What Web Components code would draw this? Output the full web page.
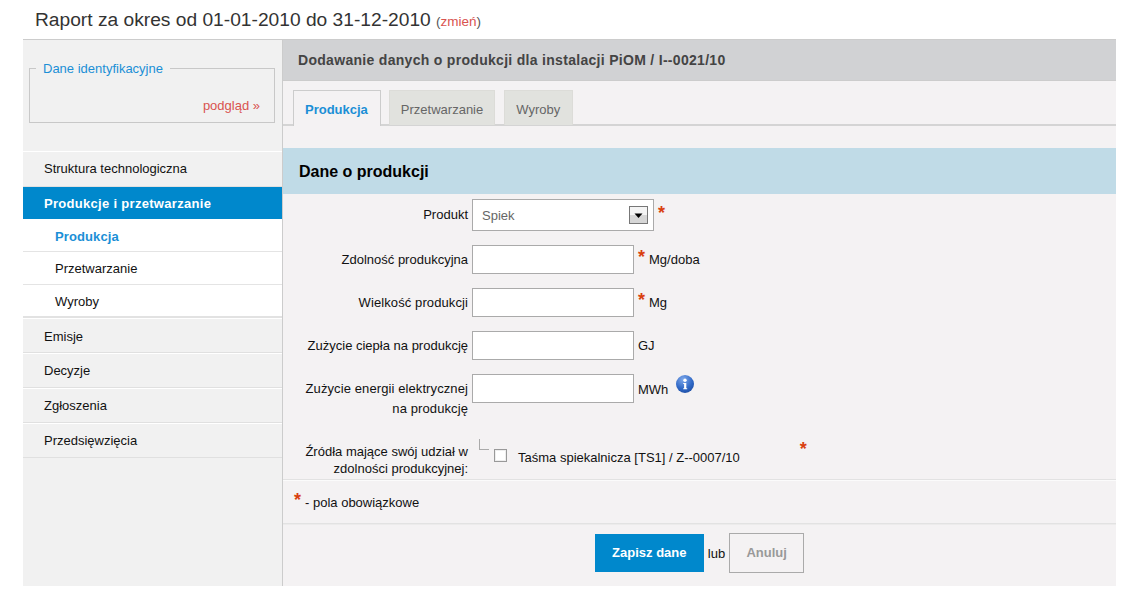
<!DOCTYPE html>
<html lang="pl">
<head>
<meta charset="utf-8">
<title>Raport</title>
<style>
  html, body { margin: 0; padding: 0; background: #fff; }
  body { font-family: "Liberation Sans", Arial, sans-serif; font-size: 13px; color: #111; }
</style>
</head>
<body>
<report-app></report-app>

<script>
// ---- naglowek strony ----
class ReportTitle extends HTMLElement {
  constructor() {
    super();
    this.attachShadow({ mode: 'open' }).innerHTML = `
      <style>
        :host { display: block; height: 39px; padding-left: 35px; box-sizing: border-box; color: #333; font-size: 19.2px; line-height: 40px; white-space: nowrap; }
        small { font-size: 13.5px; color: #555; }
        a { color: #d9534f; }
      </style>
      <slot></slot> <small>(<a><slot name="link"></slot></a>)</small>`;
  }
}

// ---- menu boczne ----
class NavItem extends HTMLElement {
  constructor() {
    super();
    this.attachShadow({ mode: 'open' }).innerHTML = `
      <style>
        :host { display: flex; align-items: center; box-sizing: border-box; height: 35px; padding-left: 21px; border-top: 1px solid #fff; border-bottom: 1px solid #e0e0e0; background: #f1f1f1; color: #111; font-size: 13px; white-space: nowrap; }
        :host([first]) { height: 36px; padding-bottom: 1px; }
        :host([nudge]) { padding-top: 1px; }
        :host([active]) { height: 32px; border: 0; background: #0088cc; color: #fff; font-weight: bold; letter-spacing: .3px; }
        :host([sub]) { height: 33px; padding-left: 32px; border-top: 0; border-bottom: 1px solid #e4e4e4; background: #fff; }
        :host([sub][current]) { padding-top: 2px; color: #1b8fd6; font-weight: bold; letter-spacing: .1px; }
        :host([sub][last]) { padding-top: 1px; border-bottom: 2px solid #e2e2e2; }
      </style>
      <slot></slot>`;
  }
}

class SideBar extends HTMLElement {
  constructor() {
    super();
    this.attachShadow({ mode: 'open' }).innerHTML = `
      <style>
        :host { display: block; box-sizing: border-box; background: #f1f1f1; border-right: 1px solid #ccc; }
        fieldset { margin: 21px 7px 28px 6px; padding: 0 14px 0; height: 62px; box-sizing: border-box; border: 1px solid #c8c8c8; }
        legend { margin-left: -8px; padding: 0 7px; color: #1b8fd6; font-size: 13px; line-height: 15px; }
        .more { margin-top: 22px; text-align: right; color: #d9534f; font-size: 13px; line-height: 15px; }
      </style>
      <fieldset>
        <legend>Dane identyfikacyjne</legend>
        <div class="more">podgląd »</div>
      </fieldset>
      <slot></slot>`;
  }
}

// ---- zakladki ----
class TabItem extends HTMLElement {
  constructor() {
    super();
    this.attachShadow({ mode: 'open' }).innerHTML = `
      <style>
        :host { display: block; box-sizing: border-box; height: 35px; padding: 0 11px; line-height: 38px; background: #e1e2de; border: 1px solid #dcdcd8; border-bottom: 0; color: #666; font-size: 13px; }
        :host([active]) { height: 36px; margin-bottom: -1px; padding: 0 12px 0 11px; background: #f4f2f3; border: 1px solid #ccc; border-bottom: 0; color: #1b8fd6; font-weight: bold; position: relative; }
        :host([last]) { margin-left: 1px; padding-right: 12px; }
      </style>
      <slot></slot>`;
  }
}

class TabBar extends HTMLElement {
  constructor() {
    super();
    this.attachShadow({ mode: 'open' }).innerHTML = `
      <style>
        :host { display: flex; gap: 8px; box-sizing: border-box; height: 45px; padding: 9px 0 0 10px; border-bottom: 2px solid #d4d4d4; }
      </style>
      <slot></slot>`;
  }
}

// ---- wiersz formularza ----
class FormRow extends HTMLElement {
  constructor() {
    super();
    this.attachShadow({ mode: 'open' }).innerHTML = `
      <style>
        :host { display: grid; grid-template-columns: 165px auto; column-gap: 4px; padding-left: 20px; align-items: start; line-height: 20px; }
        .label { text-align: right; color: #111; font-size: 13px; padding-top: var(--label-top, 5px); line-height: var(--label-line, 20px); }
        .field { display: flex; align-items: flex-start; }
      </style>
      <div class="label"><slot name="label"></slot></div>
      <div class="field"><slot></slot></div>`;
  }
}

class TextField extends HTMLElement {
  constructor() {
    super();
    this.attachShadow({ mode: 'open' }).innerHTML = `
      <style>
        :host { display: block; box-sizing: border-box; width: 162px; height: 29px; background: #fff; border: 1px solid #aaa; }
      </style>`;
  }
}

class SelectField extends HTMLElement {
  constructor() {
    super();
    this.attachShadow({ mode: 'open' }).innerHTML = `
      <style>
        :host { display: flex; align-items: center; justify-content: space-between; box-sizing: border-box; width: 182px; height: 32px; padding: 0 5px 0 9px; background: #fff; border: 1px solid #aaa; color: #666; font-size: 13px; }
        span { padding-top: 2px; }
        svg { display: block; }
      </style>
      <span><slot></slot></span>
      <svg width="19" height="18" viewBox="0 0 19 18">
        <rect width="19" height="18" fill="#777"/>
        <rect x="1" y="1" width="17" height="8" fill="#f4f4f4"/>
        <rect x="1" y="9" width="17" height="8" fill="#d6d6d6"/>
        <path d="M5.5 7.5h8l-4 4.5z" fill="#000"/>
      </svg>`;
  }
}

class ReqMark extends HTMLElement {
  constructor() {
    super();
    this.attachShadow({ mode: 'open' }).innerHTML = `
      <style>
        :host { display: inline-block; color: #d9400f; font-weight: bold; font-size: 18px; line-height: 18px; }
      </style>*`;
  }
}

class InfoIcon extends HTMLElement {
  constructor() {
    super();
    this.attachShadow({ mode: 'open' }).innerHTML = `
      <style>
        :host { display: block; width: 18px; height: 18px; }
        svg { display: block; }
      </style>
      <svg width="18" height="18" viewBox="0 0 18 18">
        <defs><radialGradient id="b" cx=".4" cy=".25" r=".85"><stop offset="0" stop-color="#7fa9ea"/><stop offset=".6" stop-color="#2f68c6"/><stop offset="1" stop-color="#1c4a9e"/></radialGradient></defs>
        <circle cx="9" cy="9" r="9" fill="url(#b)"/>
        <circle cx="9" cy="5.2" r="1.7" fill="#fff"/>
        <path d="M7.2 8h3.1v5.2h.9v1H7.2v-1h.9V9h-.9z" fill="#fff"/>
      </svg>`;
  }
}

// ---- formularz ----
class ProductForm extends HTMLElement {
  constructor() {
    super();
    this.attachShadow({ mode: 'open' }).innerHTML = `
      <style>
        :host { display: block; }
        .section { height: 46px; margin-top: 22px; padding: 1px 0 0 16px; box-sizing: border-box; background: #c0dbe7; color: #000; font-size: 16px; font-weight: bold; line-height: 45px; }
        .rows { display: flex; flex-direction: column; padding-top: 5px; }
        form-row { margin-bottom: 14px; --label-top: 5px; }
        form-row.product { --label-top: 6px; }
        form-row.energy { margin-bottom: 16px; }
        .wide { letter-spacing: .1px; }
        .unit { margin-left: 4px; padding-top: 5px; font-size: 13px; color: #111; }
        .energy .unit { padding-top: 6px; }
        req-mark { margin: 3px 0 0 4px; }
        .product req-mark { margin-top: 5px; }
        info-icon { margin: 1px 0 0 8px; }
        .tree { width: 10px; height: 11px; margin: 4px 5px 0 7px; border-left: 1px solid #aaa; border-bottom: 1px solid #aaa; box-sizing: border-box; }
        .check { width: 13px; height: 13px; margin: 14px 11px 0 0; box-sizing: border-box; background: #fff; border: 1px solid #999; box-shadow: inset 0 0 0 1px #eee; }
        .source { padding-top: 13px; white-space: nowrap; }
        .sources { --label-top: 8px; --label-line: 17px; height: 44px; margin-bottom: 0; }
        .sources req-mark { margin: 5px 0 0 60px; }
        .legend { display: flex; align-items: center; height: 45px; padding: 2px 0 0 11px; box-sizing: border-box; border-top: 1px solid #e2e2e2; border-bottom: 1px solid #e2e2e2; box-shadow: inset 0 1px 0 #fbfbfb; }
        .legend req-mark { margin: -6px 4px 0 0; }
        .actions { display: flex; align-items: center; justify-content: center; gap: 4px; box-sizing: border-box; height: 62px; padding-bottom: 4px; box-shadow: inset 0 1px 0 #ecebeb; }
        .save { box-sizing: border-box; width: 109px; height: 38px; line-height: 38px; text-align: center; background: #0088cc; color: #fff; font-weight: bold; font-size: 13px; }
        .cancel { box-sizing: border-box; width: 75px; height: 40px; line-height: 38px; text-align: center; background: #f4f2f3; color: #999; border: 1px solid #aaa; font-weight: bold; font-size: 13px; }
      </style>
      <div class="section">Dane o produkcji</div>
      <div class="rows">
        <form-row class="product"><span slot="label">Produkt</span><select-field>Spiek</select-field><req-mark></req-mark></form-row>
        <form-row><span slot="label">Zdolność produkcyjna</span><text-field></text-field><req-mark></req-mark><span class="unit">Mg/doba</span></form-row>
        <form-row><span slot="label" class="wide">Wielkość produkcji</span><text-field></text-field><req-mark></req-mark><span class="unit">Mg</span></form-row>
        <form-row><span slot="label">Zużycie ciepła na produkcję</span><text-field></text-field><span class="unit">GJ</span></form-row>
        <form-row class="energy"><span slot="label" class="wide">Zużycie energii elektrycznej na produkcję</span><text-field></text-field><span class="unit">MWh</span><info-icon></info-icon></form-row>
        <form-row class="sources"><span slot="label">Źródła mające swój udział w zdolności produkcyjnej:</span><div class="tree"></div><div class="check"></div><span class="source">Taśma spiekalnicza [TS1] / Z--0007/10</span><req-mark></req-mark></form-row>
      </div>
      <div class="legend"><req-mark></req-mark>- pola obowiązkowe</div>
      <div class="actions"><div class="save">Zapisz dane</div><span>lub</span><div class="cancel">Anuluj</div></div>`;
  }
}

// ---- cala strona ----
class ReportApp extends HTMLElement {
  constructor() {
    super();
    this.attachShadow({ mode: 'open' }).innerHTML = `
      <style>
        :host { display: block; }
        .page { display: grid; grid-template-columns: 260px 1fr; width: 1093px; height: 547px; margin-left: 23px; border-top: 1px solid #ccc; box-sizing: border-box; background: #f4f2f3; }
        .head { height: 41px; padding-left: 15px; border-bottom: 1px solid #ccc; box-sizing: border-box; background: #d1d2d4; color: #444; font-size: 14px; font-weight: bold; letter-spacing: .3px; line-height: 40px; }
      </style>
      <report-title>Raport za okres od 01-01-2010 do 31-12-2010<span slot="link">zmień</span></report-title>
      <div class="page">
        <side-bar>
          <nav-item first>Struktura technologiczna</nav-item>
          <nav-item active>Produkcje i przetwarzanie</nav-item>
          <nav-item sub current>Produkcja</nav-item>
          <nav-item sub>Przetwarzanie</nav-item>
          <nav-item sub last>Wyroby</nav-item>
          <nav-item nudge>Emisje</nav-item>
          <nav-item>Decyzje</nav-item>
          <nav-item>Zgłoszenia</nav-item>
          <nav-item>Przedsięwzięcia</nav-item>
        </side-bar>
        <div>
          <div class="head">Dodawanie danych o produkcji dla instalacji PiOM / I--0021/10</div>
          <tab-bar>
            <tab-item active>Produkcja</tab-item>
            <tab-item>Przetwarzanie</tab-item>
            <tab-item last>Wyroby</tab-item>
          </tab-bar>
          <product-form></product-form>
        </div>
      </div>`;
  }
}

customElements.define('report-title', ReportTitle);
customElements.define('nav-item', NavItem);
customElements.define('side-bar', SideBar);
customElements.define('tab-item', TabItem);
customElements.define('tab-bar', TabBar);
customElements.define('form-row', FormRow);
customElements.define('text-field', TextField);
customElements.define('select-field', SelectField);
customElements.define('req-mark', ReqMark);
customElements.define('info-icon', InfoIcon);
customElements.define('product-form', ProductForm);
customElements.define('report-app', ReportApp);
</script>
</body>
</html>
